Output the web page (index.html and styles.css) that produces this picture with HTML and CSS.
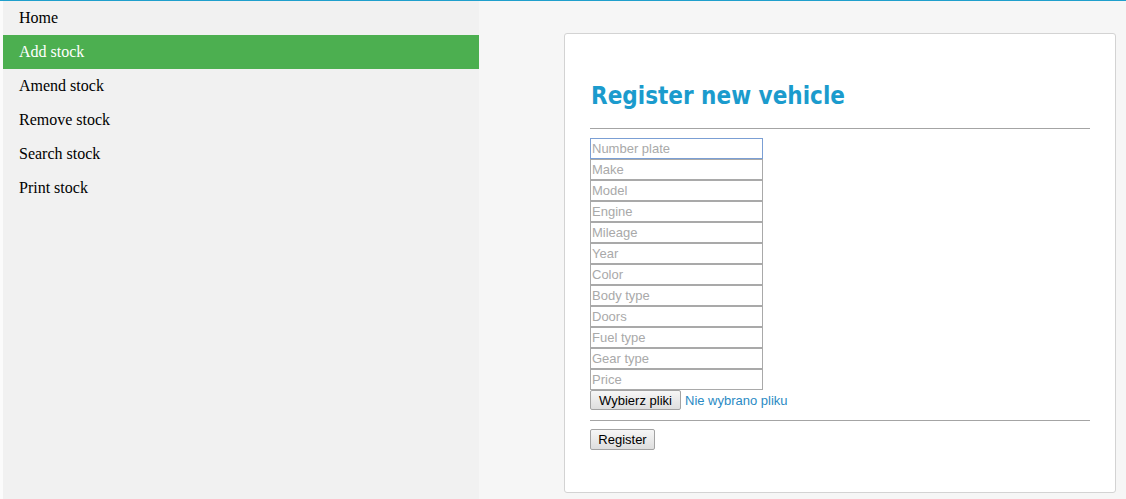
FILE: index.html
```html
<!DOCTYPE html>
<html>
<head>
<meta charset="utf-8">
<title>Register new vehicle</title>
<link rel="stylesheet" href="styles.css">
</head>
<body>
<div class="page">
  <nav class="sidebar">
    <a class="nav-item" href="#">Home</a>
    <a class="nav-item active" href="#">Add stock</a>
    <a class="nav-item" href="#">Amend stock</a>
    <a class="nav-item" href="#">Remove stock</a>
    <a class="nav-item" href="#">Search stock</a>
    <a class="nav-item" href="#">Print stock</a>
  </nav>
  <main class="main">
    <section class="card">
      <h1 class="title">Register new vehicle</h1>
      <hr class="rule">
      <form class="form">
        <input class="field focused" type="text" placeholder="Number plate">
        <input class="field" type="text" placeholder="Make">
        <input class="field" type="text" placeholder="Model">
        <input class="field" type="text" placeholder="Engine">
        <input class="field" type="text" placeholder="Mileage">
        <input class="field" type="text" placeholder="Year">
        <input class="field" type="text" placeholder="Color">
        <input class="field" type="text" placeholder="Body type">
        <input class="field" type="text" placeholder="Doors">
        <input class="field" type="text" placeholder="Fuel type">
        <input class="field" type="text" placeholder="Gear type">
        <input class="field" type="text" placeholder="Price">
        <div class="file-row">
          <button type="button" class="btn file-btn">Wybierz pliki</button>
          <span class="file-label">Nie wybrano pliku</span>
        </div>
        <hr class="rule rule-bottom">
        <button type="button" class="btn submit-btn">Register</button>
      </form>
    </section>
  </main>
</div>
</body>
</html>
```
FILE: styles.css
```css
html, body {
  margin: 0;
  padding: 0;
}
body {
  background: #fbfbfb;
  border-top: 1px solid #1f9fcc;
  height: 498px;
  overflow: hidden;
}
.page {
  display: flex;
  height: 100%;
  margin-left: 3px;
}
.sidebar {
  width: 476px;
  background: #f1f1f1;
  display: flex;
  flex-direction: column;
}
.nav-item {
  display: block;
  height: 34px;
  line-height: 34px;
  padding-left: 16px;
  font-family: "Liberation Serif", "Times New Roman", serif;
  font-size: 16px;
  color: #000;
  text-decoration: none;
}
.nav-item.active {
  background: #4caf50;
  color: #fff;
}
.main {
  flex: 1;
  background: #f6f6f6;
  padding: 32px 10px 0 85px;
}
.card {
  background: #fff;
  border: 1px solid #d3d3d3;
  border-radius: 3px;
  padding: 47px 25px 42px 25px;
}
.title {
  margin: 0 0 17px 1px;
  font-family: "DejaVu Sans Condensed", "DejaVu Sans", Tahoma, sans-serif;
  font-stretch: condensed;
  font-weight: bold;
  font-size: 24px;
  line-height: 30px;
  color: #1b9bcd;
}
.rule {
  border: 0;
  border-top: 1px solid #a4a4a4;
  margin: 0 0 9px 0;
}
.form {
  display: flex;
  flex-direction: column;
  align-items: flex-start;
}
.field {
  box-sizing: border-box;
  width: 173px;
  height: 21px;
  margin: 0;
  padding: 0 1px;
  border: 1px solid #a9a9a9;
  font-family: "Liberation Sans", Arial, sans-serif;
  font-size: 13px;
  color: #333;
  outline: none;
}
.field::placeholder {
  color: #a9a9a9;
}
.field.focused {
  border-color: #7b9fd4;
}
.file-row {
  display: flex;
  align-items: center;
  gap: 4px;
  height: 20px;
  margin-bottom: 10px;
}
.btn {
  box-sizing: border-box;
  margin: 0;
  padding: 0 6px;
  border: 1px solid #a3a3a3;
  border-radius: 2px;
  background: linear-gradient(#f6f6f6, #dedede);
  font-family: "Liberation Sans", Arial, sans-serif;
  font-size: 13px;
  color: #000;
}
.file-btn {
  width: 91px;
  height: 20px;
}
.file-label {
  font-family: "Liberation Sans", Arial, sans-serif;
  font-size: 13px;
  color: #2a8ac4;
}
.rule-bottom {
  align-self: stretch;
  margin-bottom: 8px;
}
.submit-btn {
  width: 65px;
  height: 21px;
}
```
